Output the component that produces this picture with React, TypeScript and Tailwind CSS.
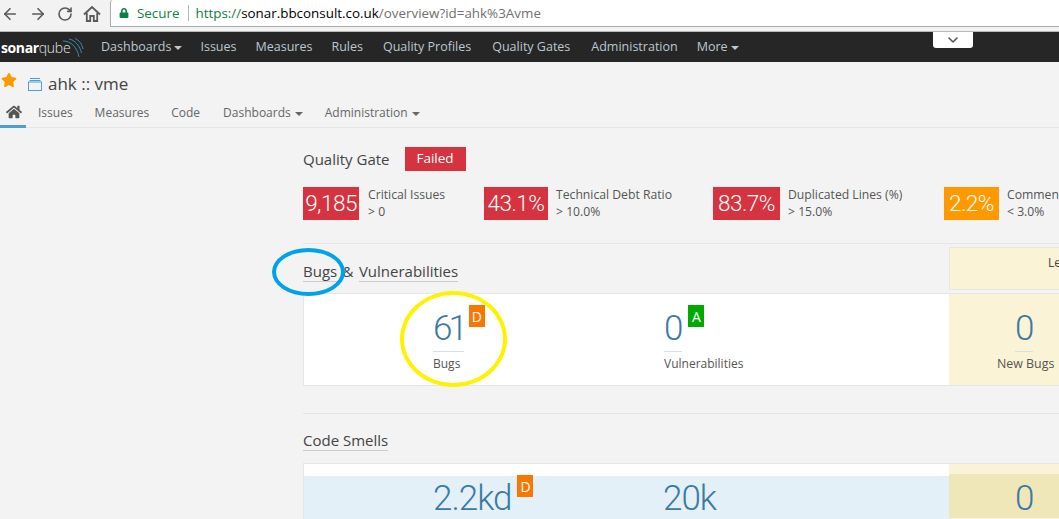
import { ArrowLeft, ArrowRight, ChevronDown, RotateCw } from 'lucide-react';
import { FaHome, FaLock, FaStar } from 'react-icons/fa';

const topNav = [
  { label: 'Dashboards', caret: true, className: 'ml-[18px]' },
  { label: 'Issues', className: 'ml-[18px]' },
  { label: 'Measures', className: 'ml-[19px]' },
  { label: 'Rules', className: 'ml-[19px]' },
  { label: 'Quality Profiles', className: 'ml-[20px]' },
  { label: 'Quality Gates', className: 'ml-[21px]' },
  { label: 'Administration', className: 'ml-[21px]' },
  { label: 'More', caret: true, className: 'ml-[19px]' },
];

const subNav = [
  { label: 'Issues', className: 'ml-[12px]' },
  { label: 'Measures', className: 'ml-[22px]' },
  { label: 'Code', className: 'ml-[22px]' },
  { label: 'Dashboards', caret: true, className: 'ml-[23px]' },
  { label: 'Administration', caret: true, className: 'ml-[22px]' },
];

const conditions = [
  { value: '9,185', label: 'Critical Issues', limit: '> 0', box: 'w-[56px] bg-[#d4333f]', gap: 'ml-[9px]', className: 'w-[181px]' },
  { value: '43.1%', label: 'Technical Debt Ratio', limit: '> 10.0%', box: 'w-[64px] bg-[#d4333f]', gap: 'ml-[8px]', className: 'w-[229px]' },
  { value: '83.7%', label: 'Duplicated Lines (%)', limit: '> 15.0%', box: 'w-[67px] bg-[#d4333f]', gap: 'ml-[8px]', className: 'w-[231px]' },
  { value: '2.2%', label: 'Comments (%)', limit: '< 3.0%', box: 'w-[55px] bg-[#ff9900]', gap: 'ml-[8px]', className: 'w-[200px]' },
];

function Caret() {
  return <span className="ml-[3px] inline-block border-x-[4px] border-t-[4px] border-x-transparent border-t-current align-middle" />;
}

function Metric({ value, badge, badgeColor, tight }: { value: string; badge?: string; badgeColor?: string; tight?: boolean }) {
  return (
    <div className="flex items-start">
      <div className="flex flex-col">
        <span className={`h-[46px] font-['Roboto',sans-serif] text-[35px] leading-[50px] font-light text-[#3a7aa5] ${tight ? 'tracking-[-4px]' : 'tracking-[-1px]'}`}>{value}</span>
        <span className="mt-[1px] h-px w-full bg-[#cfe3ee]" />
      </div>
      {badge && (
        <span className={`mt-[1px] flex h-[22px] w-[16px] items-center justify-center text-[14px] text-white ${tight ? 'ml-[5px]' : 'ml-[6px]'} ${badgeColor}`}>{badge}</span>
      )}
    </div>
  );
}

function MetricLabel({ children }: { children: string }) {
  return <div className="mt-[4px] text-[12px] leading-[16px] text-[#555]">{children}</div>;
}

export default function App() {
  return (
    <div className="relative h-[519px] w-[1059px] overflow-hidden bg-[#f3f3f3] font-['Open_Sans',sans-serif] text-[#444]">
      {/* browser chrome */}
      <div className="flex h-[32px] border-b border-[#b8b8b8] bg-[#f2f2f2]">
        <div className="flex h-[27px] w-[110px] items-center pl-[1px] text-[#5a5a5a]">
          <ArrowLeft size={18} strokeWidth={2.2} />
          <ArrowRight size={18} strokeWidth={2.2} className="ml-[10px]" />
          <RotateCw size={16} strokeWidth={2.4} className="ml-[10px]" />
          <svg className="ml-[10px]" width="18" height="18" viewBox="0 0 18 18" fill="none" stroke="currentColor" strokeWidth="1.8">
            <path d="M1 9.5 9 2l8 7.5" />
            <path d="M3.8 8v8h3.4v-5h3.6v5h3.4V8" />
          </svg>
        </div>
        <div className="flex h-[27px] flex-1 items-center rounded-tl-[3px] border-b border-l border-[#a9a9a9] bg-white pl-[8px] text-[13.4px]">
          <FaLock size={10} className="text-[#0b8043]" />
          <span className="ml-[8px] text-[#0b8043]">Secure</span>
          <span className="ml-[9px] h-[16px] w-px bg-[#b5b5b5]" />
          <span className="ml-[6px] text-[#0b8043]">https://</span>
          <span className="text-black">sonar.bbconsult.co.uk</span>
          <span className="text-[#6f6f6f]">/overview?id=ahk%3Avme</span>
        </div>
      </div>

      {/* top nav */}
      <nav className="relative flex h-[30px] items-center bg-[#262626] pt-[1px] text-[12.5px] text-[#bcc8d0]">
        <div className="relative flex w-[83px] items-center pl-[1px] text-[14px] leading-none text-[#e4e4e4]">
          <span className="font-bold tracking-[-0.4px] text-white">sonar</span>
          <span className="font-light tracking-[-0.2px]">qube</span>
          <svg className="absolute top-[-3px] left-[62px]" width="22" height="22" viewBox="0 0 22 22" fill="none" stroke="#3f87b3" strokeWidth="1">
            <path d="M1 3 C9 3 15 9 17 19" />
            <path d="M7 1 C13 2 18 8 19.5 15" />
            <path d="M13 0.5 C17 2 20 6 21 11" />
          </svg>
        </div>
        {topNav.map((item) => (
          <span key={item.label} className={`${item.className} whitespace-nowrap`}>
            {item.label}
            {item.caret && <Caret />}
          </span>
        ))}
        <div className="absolute top-0 left-[933px] flex h-[16px] w-[40px] items-center justify-center rounded-b-[3px] bg-white text-[#555]">
          <ChevronDown size={16} strokeWidth={2.4} />
        </div>
      </nav>

      {/* project header */}
      <header className="h-[66px] border-b border-[#e6e6e6] bg-[#f3f3f3]">
        <div className="flex h-[42px] items-center pt-[2px]">
          <FaStar size={16} className="mt-[-8px] ml-[1px] text-[#ff9900]" />
          <svg className="ml-[11px]" width="14" height="14" viewBox="0 0 14 14" fill="none" stroke="#4b9fd5">
            <path d="M2 1.5h10M1.5 3.5h11" />
            <rect x="0.5" y="5" width="13" height="8.5" />
          </svg>
          <span className="ml-[6px] text-[17px] text-[#444]">ahk :: vme</span>
        </div>
        <div className="flex h-[24px] items-start text-[12px] text-[#666]">
          <div className="flex h-[24px] w-[26px] justify-center border-b-[3px] border-[#4b9fd5] pl-[1px]">
            <FaHome size={16} className="text-[#555]" />
          </div>
          {subNav.map((item) => (
            <span key={item.label} className={`${item.className} whitespace-nowrap`}>
              {item.label}
              {item.caret && <span className="ml-[1px]"><Caret /></span>}
            </span>
          ))}
        </div>
      </header>

      {/* overview */}
      <main className="ml-[303px] w-[756px]">
        <div className="flex h-[116px] flex-col border-b border-[#e6e6e6]">
          <div className="mt-[19px] flex h-[24px] items-center">
            <h2 className="text-[15px] text-[#444]">Quality Gate</h2>
            <span className="ml-[15px] flex h-[24px] w-[61px] items-center justify-center bg-[#d4333f] pb-[2px] text-[13.5px] text-white">Failed</span>
          </div>
          <div className="mt-[16px] flex">
            {conditions.map((c) => (
              <div key={c.label} className={`flex shrink-0 ${c.className}`}>
                <div className={`flex h-[33px] items-center justify-center font-['Roboto',sans-serif] text-[22.5px] font-light tracking-[-0.5px] text-white ${c.box}`}>{c.value}</div>
                <div className={`${c.gap} mt-[-1px] text-[12.2px] leading-[17px] whitespace-nowrap text-[#555]`}>
                  <div>{c.label}</div>
                  <div>{c.limit}</div>
                </div>
              </div>
            ))}
          </div>
        </div>

        {/* bugs */}
        <section className="relative h-[142px]">
          <div className="flex h-[49px]">
            <div className="w-[646px] shrink-0 pt-[17px] text-[15px] leading-[20px] text-[#444]">
              <span className="border-b border-[#ccc]">Bugs</span>
              <span className="mx-[1.5px]"> &amp; </span>
              <span className="border-b border-[#ccc]">Vulnerabilities</span>
            </div>
            <div className="mt-[3px] h-[43px] min-w-0 flex-1 border-y border-l border-[#e6e6e6] bg-[#fbf3d5] pt-[6px] pl-[98px] text-[12px] whitespace-nowrap text-[#444]">Leak Period</div>
          </div>
          <div className="flex h-[93px] border-y border-l border-[#e6e6e6]">
            <div className="flex w-[645px] shrink-0 bg-white pt-[10px]">
              <div className="ml-[129px] w-[231px]">
                <Metric value="61" badge="D" badgeColor="bg-[#f77700]" tight />
                <MetricLabel>Bugs</MetricLabel>
              </div>
              <div>
                <Metric value="0" badge="A" badgeColor="bg-[#00aa00]" />
                <MetricLabel>Vulnerabilities</MetricLabel>
              </div>
            </div>
            <div className="flex-1 bg-[#fbf3d5] pt-[10px] pl-[48px]">
              <div className="w-[58px]">
                <div className="ml-[18px] w-[19px]"><Metric value="0" /></div>
                <div className="mt-[4px] text-[12.4px] leading-[16px] whitespace-nowrap text-[#555]">New Bugs</div>
              </div>
            </div>
          </div>
        </section>

        {/* code smells */}
        <section className="mt-[27px] border-t border-[#e6e6e6] pt-[16px]">
          <div className="h-[33px] text-[15px] leading-[20px] text-[#444]">
            <span className="border-b border-[#ccc]">Code Smells</span>
          </div>
          <div className="flex h-[56px] border-t border-l border-[#e6e6e6]">
            <div className="w-[645px] shrink-0 bg-white pt-[12px]">
              <div className="flex h-[44px] bg-[#e3f0f8]">
                <div className="mt-[-2px] ml-[129px] w-[230px]">
                  <Metric value="2.2kd" badge="D" badgeColor="bg-[#f77700]" />
                </div>
                <div className="mt-[-2px]"><Metric value="20k" /></div>
              </div>
            </div>
            <div className="flex-1 bg-[#fbf3d5] pt-[12px]">
              <div className="h-[44px] bg-[#f0e7b9] pl-[66px]">
                <div className="mt-[-2px]"><Metric value="0" /></div>
              </div>
            </div>
          </div>
        </section>
      </main>

      {/* hand-drawn annotations */}
      <div className="absolute top-[248px] left-[272px] h-[48px] w-[73px] rounded-[50%] border-[4px] border-[#00a2e8]" />
      <div className="absolute top-[291px] left-[400px] h-[96px] w-[107px] rounded-[50%] border-[4px] border-[#fff200]" />
    </div>
  );
}
